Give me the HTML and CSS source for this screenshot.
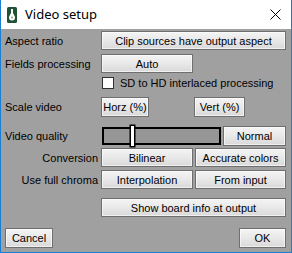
FILE: index.html
```html
<!DOCTYPE html>
<html>
<head>
<meta charset="utf-8">
<link rel="stylesheet" href="styles.css">
</head>
<body>
<div class="window">
  <div class="titlebar">
    <svg class="app-icon" width="10" height="16" viewBox="0 0 10 16">
      <rect x="0" y="0" width="10" height="16" rx="1.5" fill="#1f5236"/>
      <rect x="4" y="2" width="2" height="5" fill="#ffffff"/>
      <path d="M3.6 6.5 L6.4 6.5 L8 10 Q8.2 13.6 5 13.6 Q1.8 13.6 2 10 Z" fill="#ffffff"/>
      <circle cx="5" cy="10.5" r="1" fill="#7fa08c"/>
    </svg>
    <span class="title">Video setup</span>
    <svg class="close" width="11" height="11" viewBox="0 0 11 11">
      <path d="M0.5 0.5 L10.5 10.5 M10.5 0.5 L0.5 10.5" stroke="#000" stroke-width="1" fill="none"/>
    </svg>
  </div>
  <div class="content">
    <div class="row r1">
      <span class="label">Aspect ratio</span>
      <button class="btn full">Clip sources have output aspect</button>
    </div>
    <div class="row r2">
      <span class="label">Fields processing</span>
      <button class="btn half">Auto</button>
    </div>
    <div class="row r3">
      <span class="label"></span>
      <label class="check"><span class="box"></span><span>SD to HD interlaced processing</span></label>
    </div>
    <div class="row r4">
      <span class="label">Scale video</span>
      <div class="pair-scale">
        <button class="btn horz">Horz (%)</button>
        <button class="btn vert">Vert (%)</button>
      </div>
    </div>
    <div class="row r5">
      <span class="label">Video quality</span>
      <div class="quality">
        <div class="slider"><span class="thumb"></span></div>
        <button class="btn normal">Normal</button>
      </div>
    </div>
    <div class="row r6">
      <span class="label right">Conversion</span>
      <div class="pair">
        <button class="btn">Bilinear</button>
        <button class="btn">Accurate colors</button>
      </div>
    </div>
    <div class="row r7">
      <span class="label right">Use full chroma</span>
      <div class="pair">
        <button class="btn">Interpolation</button>
        <button class="btn">From input</button>
      </div>
    </div>
    <div class="row r8">
      <span class="label"></span>
      <button class="btn full">Show board info at output</button>
    </div>
    <div class="footer">
      <button class="btn cancel">Cancel</button>
      <button class="btn ok">OK</button>
    </div>
  </div>
</div>
</body>
</html>
```

FILE: styles.css
```css
* { box-sizing: border-box; }
html, body { margin: 0; padding: 0; }
body {
  width: 292px;
  height: 253px;
  overflow: hidden;
  font-family: "Liberation Sans", Arial, sans-serif;
  font-size: 11px;
  color: #000;
}
.window {
  width: 292px;
  height: 253px;
  border-left: 1px solid #1a7fd4;
  border-right: 1px solid #1a7fd4;
  border-bottom: 1px solid #1a7fd4;
  background: #a0a0a0;
  display: flex;
  flex-direction: column;
}
.titlebar {
  height: 29px;
  background: #ffffff;
  display: flex;
  align-items: center;
  position: relative;
}
.app-icon {
  margin-left: 6px;
  margin-top: 1px;
  display: block;
}
.title {
  margin-left: 8px;
  font-family: "Noto Sans", "Open Sans", sans-serif;
  font-size: 13px;
  color: #000;
  margin-top: -1px;
}
.close {
  margin-left: auto;
  margin-right: 10px;
  margin-top: -1px;
  display: block;
}
.content {
  padding: 2px 4px 0 4px;
  display: flex;
  flex-direction: column;
}
.row {
  display: grid;
  grid-template-columns: 96px 185px;
  align-items: center;
}
.label { white-space: nowrap; }
.label.right { text-align: right; padding-right: 3px; }
.btn {
  font-family: "Liberation Sans", Arial, sans-serif;
  font-size: 11px;
  color: #000;
  border: 1px solid #6f6f6f;
  background: linear-gradient(#f4f4f4, #e8e8e8 50%, #d9d9d9);
  box-shadow: inset 0 0 0 1px rgba(255,255,255,0.6);
  padding: 0;
  margin: 0;
  border-radius: 0;
  height: 19px;
  white-space: nowrap;
}
.full { width: 185px; }
.r1 { height: 19px; }
.r2 { margin-top: 4px; height: 19px; }
.half { width: 92px; }
.r3 { margin-top: 4px; height: 12px; }
.check { display: flex; align-items: center; margin-left: 1px; }
.box {
  width: 12px;
  height: 12px;
  background: #fff;
  border: 1px solid #333;
  margin-right: 6px;
}
.r4 { margin-top: 8px; height: 20px; }
.pair-scale { display: flex; }
.horz { width: 48px; height: 20px; }
.vert { width: 51px; height: 20px; margin-left: 45px; }
.r5 { margin-top: 8px; height: 21px; }
.quality { display: flex; align-items: center; }
.slider {
  width: 119px;
  height: 18px;
  margin-left: 1px;
  border: 2px solid #000;
  background: #969696;
  position: relative;
}
.thumb {
  position: absolute;
  left: 26px;
  top: -4px;
  width: 5px;
  height: 22px;
  background: #fff;
  border: 1px solid #000;
  box-shadow: 0 0 0 0.5px #000;
}
.normal { width: 63px; height: 20px; margin-left: 2px; }
.r6 { margin-top: 2px; height: 19px; }
.r7 { margin-top: 3px; height: 19px; }
.pair { display: grid; grid-template-columns: 92px 91px; column-gap: 2px; }
.r8 { margin-top: 9px; height: 19px; }
.footer {
  margin-top: 11px;
  display: flex;
  justify-content: space-between;
  padding-left: 0;
}
.cancel { width: 48px; height: 20px; }
.ok { width: 47px; height: 20px; margin-right: 1px; }
```
